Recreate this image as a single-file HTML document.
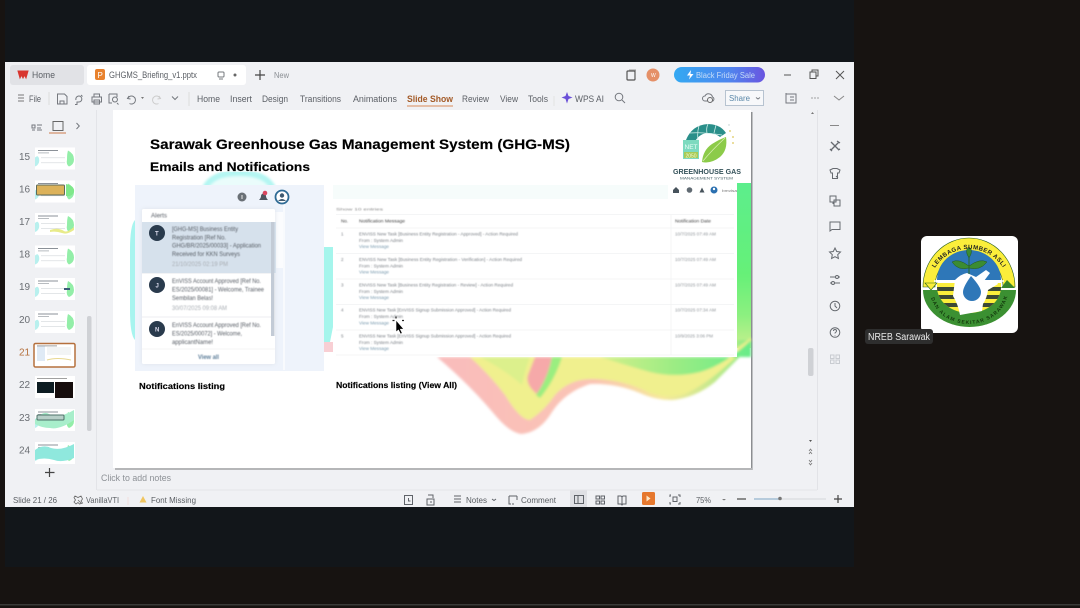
<!DOCTYPE html>
<html><head><meta charset="utf-8"><title>GHG-MS Briefing</title>
<style>
html,body{margin:0;padding:0;background:#171311;width:1080px;height:608px;overflow:hidden}
svg{display:block;font-family:"Liberation Sans",sans-serif}
.ui{fill:#5c6066;font-size:9px}
.ic{fill:none;stroke:#74787e;stroke-width:1}
.a{fill:#565c64;font-size:6px}
.g{fill:#a8adb3;font-size:6px}
.t{fill:#7c8187;font-size:4.5px}
.l{fill:#7c9cb0;font-size:4.5px}
.h{fill:#444;font-size:4.6px}
.d{fill:#92979c;font-size:4.3px}
.n{fill:#6a6e73;font-size:10px}
.b{fill:#000;font-weight:bold;stroke:#000;stroke-width:.15}
</style></head>
<body>
<svg width="1080" height="608" viewBox="0 0 1080 608" xmlns="http://www.w3.org/2000/svg">
<defs>
<linearGradient id="sale" x1="0" x2="1"><stop offset="0" stop-color="#33a9f2"/><stop offset=".6" stop-color="#4f86ee"/><stop offset="1" stop-color="#6a55e0"/></linearGradient>
<linearGradient id="gr" x1="0" y1="0" x2="0" y2="1"><stop offset="0" stop-color="#5cee8c"/><stop offset=".55" stop-color="#66f078"/><stop offset=".8" stop-color="#8cf080"/><stop offset="1" stop-color="#c8f08e"/></linearGradient>
<linearGradient id="gb" x1="0" y1="0" x2="1" y2="0"><stop offset="0" stop-color="#d4f08a"/><stop offset=".5" stop-color="#9bec84"/><stop offset="1" stop-color="#68ec88"/></linearGradient>
<linearGradient id="outer" gradientUnits="userSpaceOnUse" x1="437" y1="0" x2="751" y2="0"><stop offset="0" stop-color="#f9bcbc"/><stop offset=".5" stop-color="#fac4b4"/><stop offset=".72" stop-color="#f6e89a"/><stop offset=".85" stop-color="#cfe88e"/><stop offset="1" stop-color="#8cec84"/></linearGradient>
<filter id="s" x="-5%" y="-5%" width="110%" height="110%"><feGaussianBlur stdDeviation=".3"/></filter>
<filter id="s2" x="-5%" y="-5%" width="110%" height="110%"><feGaussianBlur stdDeviation=".5"/></filter>
<filter id="s1" x="-5%" y="-5%" width="110%" height="110%"><feGaussianBlur stdDeviation="1.200"/></filter>
<filter id="s3" x="-30%" y="-30%" width="160%" height="160%"><feGaussianBlur stdDeviation="2"/></filter>
<clipPath id="stripe"><path d="M937 283h64v4A32 26 0 0 1 937 287Z"/></clipPath>
<g id="th">
<rect x="0" y="0" width="40" height="22" fill="#fff"/>
<path d="M33 3q6 3 6 9q0 5-5 7q-3-2-2-7q0-6 1-9z" fill="#93eea8"/>
<path d="M0 10q3-3 4 1q1 4-2 7l-2 1z" fill="#b8f0ee"/>
<rect x="3" y="2.500" width="20" height="1" fill="#8b9198"/>
<rect x="3" y="5" width="11" height=".8" fill="#a6abb0"/>
<rect x="6" y="10" width="24" height=".6" fill="#d0d4d8"/>
<rect x="6" y="15" width="24" height=".6" fill="#d0d4d8"/>
</g>
<path id="arcT" d="M930 280A40 40 0 0 1 1008 280"/>
<path id="arcB" d="M930 290A39 34 0 0 0 1008 290"/>
</defs>

<rect width="1080" height="608" fill="#171311"/>
<rect x="5" y="0" width="849" height="567" fill="#12161a"/>
<rect x="0" y="604" width="1080" height="1.500" fill="#3a3a38"/>

<g filter="url(#s)">
<!-- window -->
<rect x="5" y="62" width="849" height="445" fill="#f0f1f4"/>
<rect x="10" y="65" width="74" height="20" rx="3" fill="#e1e2e6"/>
<rect x="87" y="65" width="159" height="20" rx="3" fill="#fff"/>
<path d="M18 71h10l-2 7-1.500-3-1.500 3-1.500-3-1.500 3z" fill="#d8362e" stroke="#d8362e"/>
<text x="32" y="78" class="ui" textLength="23" lengthAdjust="spacingAndGlyphs">Home</text>
<rect x="95" y="69" width="10" height="11" rx="2" fill="#e8822e"/>
<text x="97.500" y="78" font-size="8" fill="#fff">P</text>
<text x="109" y="78" class="ui" textLength="88" lengthAdjust="spacingAndGlyphs">GHGMS_Briefing_v1.pptx</text>
<rect x="218" y="72" width="6" height="5" rx="1" class="ic" stroke="#888"/><path d="M219 79h4" class="ic"/>
<circle cx="235" cy="75" r="1.500" fill="#666"/>
<path d="M260 70v10M255 75h10" stroke="#444" stroke-width="1.200"/>
<text x="274" y="78" fill="#8a8e93" font-size="8" textLength="15" lengthAdjust="spacingAndGlyphs">New</text>
<rect x="627" y="71" width="8" height="9" rx="1" fill="none" stroke="#555" stroke-width="1.200"/><path d="M629 70h6.500v8" fill="none" stroke="#999"/>
<circle cx="653" cy="75" r="6.500" fill="#e59068"/>
<text x="651" y="77" font-size="5" fill="#fff">W</text>
<rect x="674" y="67" width="91" height="15.500" rx="7.700" fill="url(#sale)"/>
<path d="M691 70l-4 5.500h3l-1 4 4.500-5.500h-3z" fill="#fff"/>
<text x="696" y="78" fill="#c6dcf8" font-size="8" textLength="59" lengthAdjust="spacingAndGlyphs">Black Friday Sale</text>
<path d="M784 75h7" stroke="#555" stroke-width="1"/>
<rect x="810" y="72" width="6" height="6.500" fill="none" stroke="#555"/><path d="M812 72v-2h6v6h-2" fill="none" stroke="#555"/>
<path d="M836 71l8 8M844 71l-8 8" stroke="#555"/>

<!-- toolbar -->
<path d="M18 95h6M18 98h6M18 101h6" stroke="#777"/>
<text x="29" y="102" class="ui" font-size="8.500" textLength="12" lengthAdjust="spacingAndGlyphs">File</text>
<path d="M49 92v13" stroke="#ddd"/>
<path d="M57.500 94h7l2.500 2.500v7.500h-9.500zM60 104v-3h4v3" class="ic"/>
<path d="M76 100a3 3 0 1 1 3 2h-2v2.500h-2M81 95l1.500 1.500" class="ic"/>
<path d="M92 97h9.500v5h-9.500zM94 97v-3h5.500v3M94 100h5.500v4H94z" class="ic"/>
<path d="M109 94h8v3M109 94v9h3M115 102a2.500 2.500 0 1 0-.1 0zM117 103l1.500 1.500" class="ic"/>
<path d="M129 96l-1.500 2.500 3 .5M128 98a4 4 0 1 1 1.500 5.500" class="ic"/>
<path d="M141 97l1.500 2 1.500-2z" fill="#777"/>
<path d="M159 96l1.500 2.500-3 .5M160 98a4 4 0 1 0-1.500 5.500" fill="none" stroke="#ccc"/>
<path d="M172 96.500l3 3 3-3" class="ic"/>
<path d="M189 92v14" stroke="#ddd"/>
<g class="ui">
<text x="197" y="102" textLength="23" lengthAdjust="spacingAndGlyphs">Home</text>
<text x="230" y="102" textLength="22" lengthAdjust="spacingAndGlyphs">Insert</text>
<text x="262" y="102" textLength="26" lengthAdjust="spacingAndGlyphs">Design</text>
<text x="300" y="102" textLength="41" lengthAdjust="spacingAndGlyphs">Transitions</text>
<text x="353" y="102" textLength="44" lengthAdjust="spacingAndGlyphs">Animations</text>
<text x="462" y="102" textLength="27" lengthAdjust="spacingAndGlyphs">Review</text>
<text x="500" y="102" textLength="18" lengthAdjust="spacingAndGlyphs">View</text>
<text x="528" y="102" textLength="20" lengthAdjust="spacingAndGlyphs">Tools</text>
<text x="575" y="102" textLength="29" lengthAdjust="spacingAndGlyphs">WPS AI</text>
</g>
<text x="407" y="102" font-size="9" font-weight="bold" fill="#a35a28" textLength="46" lengthAdjust="spacingAndGlyphs">Slide Show</text>
<rect x="407" y="105.500" width="46" height="1" fill="#d88a5a"/>
<path d="M554 96v10" stroke="#e2e2e2"/>
<path d="M567 92l1.500 4 4 1.500-4 1.500-1.500 4.500-1.500-4.500-4-1.500 4-1.500z" fill="#6a4fd8"/>
<circle cx="619" cy="97" r="3.800" class="ic"/><path d="M622 100l3 3" class="ic"/>
<path d="M705 101a2.500 2.500 0 0 1 0-5 4 4 0 0 1 7.500 1 2.300 2.300 0 0 1 .5 4z" class="ic"/><circle cx="710" cy="100" r="2.500" fill="#f0f1f4" stroke="#666"/>
<rect x="725.500" y="90.500" width="38" height="15" fill="#f7f8fa" stroke="#b7c3d0"/>
<text x="729" y="101" font-size="8" fill="#5a87a8" textLength="21" lengthAdjust="spacingAndGlyphs">Share</text>
<path d="M756 97.500l2 1.500 2-1.500" class="ic"/>
<path d="M786 94h10v9h-10zM786 94v-1M790 97h4M790 100h4" class="ic"/>
<circle cx="812" cy="98" r=".6" fill="#666"/><circle cx="815" cy="98" r=".6" fill="#666"/><circle cx="818" cy="98" r=".6" fill="#666"/>
<path d="M834 96l5 4 5-4" fill="none" stroke="#888"/>

<!-- left panel -->
<path d="M96.500 110v380" stroke="#e3e4e8"/>
<path d="M32 125h3v3h-3zM32 130h3M37 125h5M37 128h4M37 130h5" class="ic" stroke="#888"/>
<rect x="53" y="121.500" width="10" height="9" fill="none" stroke="#666"/>
<rect x="49" y="132.500" width="17" height="1" fill="#cc7a4c"/>
<path d="M76.500 123l2.800 3-2.800 3" class="ic"/>
<rect x="87" y="316" width="4.500" height="115" rx="2" fill="#cfd1d5"/>
<g class="n">
<text x="19" y="160" textLength="11">15</text>
<text x="19" y="192.500" textLength="11">16</text>
<text x="19" y="225" textLength="11">17</text>
<text x="19" y="257.500" textLength="11">18</text>
<text x="19" y="290" textLength="11">19</text>
<text x="19" y="323" textLength="11">20</text>
<text x="19" y="355.500" style="fill:#b5703c" textLength="11">21</text>
<text x="19" y="388" textLength="11">22</text>
<text x="19" y="421" textLength="11">23</text>
<text x="19" y="453.500" textLength="11">24</text>
</g>
<use href="#th" x="35" y="147.500"/>
<use href="#th" x="35" y="180.500"/>
<rect x="36.500" y="185" width="28" height="10" rx="1" fill="#dcb25a" stroke="#5c6a5a"/>
<path d="M66 184q9 2 8 8q-2 5-8 4z" fill="#7fe88a"/>
<use href="#th" x="35" y="213"/>
<path d="M50 230q8-3 14 1q3 2 10-4v3q-7 5-12 3q-6-2-12-1z" fill="#e8eb8a"/>
<use href="#th" x="35" y="245.500"/>
<use href="#th" x="35" y="278"/>
<rect x="64" y="288" width="6" height="2" fill="#3d5a78"/>
<use href="#th" x="35" y="311"/>
<rect x="34" y="343.500" width="41" height="23.500" rx="1.500" fill="#fff" stroke="#b5703c" stroke-width="1.500"/>
<rect x="37" y="346" width="8" height="15" fill="#dfeaf5"/>
<rect x="47" y="347" width="24" height="8" fill="#f2f4f5"/>
<path d="M47 360q10-3 24 0" fill="none" stroke="#e8d890"/>
<rect x="37" y="345.500" width="20" height=".8" fill="#888"/>
<rect x="35" y="376" width="40" height="22" fill="#fff"/>
<rect x="37" y="382" width="17" height="11" fill="#0b1a20"/><rect x="55" y="382" width="18" height="16" fill="#120a0a"/>
<rect x="37" y="378" width="30" height=".8" fill="#888"/>
<use href="#th" x="35" y="409"/>
<path d="M35 420q8-10 14-6q10 5 25-4v10q-14 10-24 8q-8 0-15-4z" fill="#a8eecb"/>
<rect x="37" y="415" width="27" height="5" rx="1" fill="#b7cfc8" stroke="#4e7068"/>
<use href="#th" x="35" y="442"/>
<path d="M35 450q8-6 16-2q10 3 23-4v14q-12 5-20 2q-10-3-19 0z" fill="#8fe8dd"/>
<path d="M49.500 468v9M45 472.500h9.500" stroke="#444" stroke-width="1.200"/>

<!-- slide -->
<rect x="751" y="112" width="1.500" height="358" fill="#8c8e91"/>
<rect x="115" y="468" width="637" height="2" fill="#b5b6b8"/>
<rect x="113" y="110" width="638" height="358" fill="#fff"/>
<!-- swooshes -->
<path d="M203 190q6-20 36-20q30 0 36 20z" fill="#eafcfb"/>
<path d="M205 188q7-15 34-15q27 0 34 15" fill="none" stroke="#b4f6f2" stroke-width="6" filter="url(#s1)"/>
<path d="M135 220q-5 5-5 30v60q0 25 5 30z" fill="#a8f4ef"/>
<path d="M324 247h9v80l-3 15h-6z" fill="#a5f5ec"/>
<path d="M324 342h9v10h-9z" fill="#f8cfd4"/>
<path d="M737 183h14v165h-14z" fill="url(#gr)"/>
<g filter="url(#s1)">
<path d="M437 357Q470 385 495 415Q510 433 522 434Q540 432 552 412Q565 392 590 384Q615 383 640 393Q655 400 672 400Q695 398 715 382Q735 362 751 345V340H737V357Z" fill="url(#outer)"/>
<path d="M470 357Q490 375 505 395Q520 420 530 420Q545 410 555 395Q570 378 595 379Q625 380 650 393Q668 399 685 394Q715 380 751 342V338L737 348V357Z" fill="#f0f08e"/>
<path d="M480 357H530Q525 370 522 385Q505 370 480 357Z" fill="#dcf08c"/>
<path d="M535 357H552Q548 380 538 395Q525 385 528 375Z" fill="#f6a9a9"/>
<path d="M552 357H562Q555 380 540 398L536 395Q548 378 552 357Z" fill="#9aee80"/>
<path d="M600 357H751V340Q725 365 700 372Q675 378 650 372Q625 365 600 357Z" fill="url(#gb)"/>
</g>
<text x="150" y="149" class="b" font-size="14" textLength="420" lengthAdjust="spacingAndGlyphs">Sarawak Greenhouse Gas Management System (GHG-MS)</text>
<text x="150" y="171" class="b" font-size="12" textLength="160" lengthAdjust="spacingAndGlyphs">Emails and Notifications</text>
<text x="139" y="389" class="b" font-size="8" textLength="86" lengthAdjust="spacingAndGlyphs">Notifications listing</text>
<text x="336" y="388" class="b" font-size="8" textLength="121" lengthAdjust="spacingAndGlyphs">Notifications listing (View All)</text>

<!-- ghg logo -->
<path d="M686 140Q692 125 708 124Q720 124 726 133L720 137Q712 131 703 134Q696 137 693 146Z" fill="#2b8f8a"/>
<path d="M690 133Q702 132 722 135M699 126Q697 132 698 140M708 124Q706 128 707 133M716 125Q715 129 714 133" fill="none" stroke="#cfeee9" stroke-width=".8"/>
<path d="M702 162Q703 150 712 144Q720 139 726 137Q728 150 720 157Q711 164 702 162Z" fill="#8ccb4a"/>
<path d="M703 161Q712 150 725 138" stroke="#d8eeb0" fill="none" stroke-width=".8"/>
<rect x="683" y="140" width="16" height="19" fill="#7ddabf"/>
<text x="684.500" y="149" font-size="6.500" fill="#eafff8" textLength="13" lengthAdjust="spacingAndGlyphs">NET</text>
<rect x="684" y="152" width="14" height="6" fill="#a9cb55"/>
<text x="685.500" y="157.500" font-size="5" fill="#f4f8d8" textLength="11">2050</text>
<circle cx="730" cy="131" r=".9" fill="#dcc65a"/><circle cx="733" cy="137" r=".9" fill="#dcc65a"/><circle cx="733" cy="143" r=".9" fill="#dcc65a"/><circle cx="729" cy="125" r=".7" fill="#bcc"/>
<text x="673" y="174" font-size="7.500" font-weight="bold" fill="#35525a" textLength="68" lengthAdjust="spacingAndGlyphs">GREENHOUSE GAS</text>
<text x="680" y="179.500" font-size="4" fill="#4a6468" textLength="53" lengthAdjust="spacingAndGlyphs">MANAGEMENT SYSTEM</text>

<!-- alerts panel -->
<rect x="135" y="185" width="189" height="186" fill="#eef3fb"/>
<rect x="275" y="212" width="8" height="56" fill="#fbfcfe"/>
<rect x="283" y="205" width="2" height="165" fill="#fff" opacity=".6"/>
<circle cx="242" cy="197" r="4.500" fill="#6a6f76"/><rect x="241.500" y="195" width="1" height="4" fill="#e8e8e8"/>
<path d="M259 200q2-2 2-4a2.500 2.500 0 0 1 5 0q0 2 2 4z" fill="#4d5561"/><circle cx="265" cy="193" r="2.300" fill="#d9455f"/>
<circle cx="282" cy="197" r="6.500" fill="#fff" stroke="#2e6a94" stroke-width="1.800"/><circle cx="282" cy="195.500" r="2.200" fill="#3f5a70"/><path d="M278 201q4-4 8 0" fill="#3f5a70"/>
<rect x="142" y="209" width="133" height="155" fill="#dfe3ea" filter="url(#s3)"/>
<rect x="142" y="209" width="133" height="155" rx="1.500" fill="#fff"/>
<rect x="142" y="222" width="134" height="51" fill="#d6e1ec"/>
<rect x="271" y="222" width="3.500" height="114" fill="#c3cbd6"/>
<path d="M142 317h129" stroke="#eceef1"/><path d="M142 273.500h129" stroke="#f2f3f5"/><path d="M142 349h133" stroke="#f4f5f6"/>
<circle cx="157" cy="233" r="8" fill="#2a3a4d"/><text x="155" y="235.500" font-size="6" fill="#dde" font-weight="bold">T</text>
<circle cx="157" cy="285" r="8" fill="#2a3a4d"/><text x="155.500" y="287.500" font-size="6" fill="#dde" font-weight="bold">J</text>
<circle cx="157" cy="329" r="8" fill="#2a3a4d"/><text x="155" y="331.500" font-size="6" fill="#dde" font-weight="bold">N</text>
<g filter="url(#s2)">
<text x="151" y="217.500" class="a" textLength="16" lengthAdjust="spacingAndGlyphs">Alerts</text>
<text x="172" y="231" class="a" textLength="66" lengthAdjust="spacingAndGlyphs">[GHG-MS] Business Entity</text>
<text x="172" y="239.500" class="a" textLength="54" lengthAdjust="spacingAndGlyphs">Registration [Ref No.</text>
<text x="172" y="247.500" class="a" textLength="89" lengthAdjust="spacingAndGlyphs">GHG/BR/2025/00033] - Application</text>
<text x="172" y="256" class="a" textLength="68" lengthAdjust="spacingAndGlyphs">Received for KKN Surveys</text>
<text x="172" y="266" class="g" textLength="56" lengthAdjust="spacingAndGlyphs">21/10/2025 02:19 PM</text>
<text x="172" y="283" class="a" textLength="89" lengthAdjust="spacingAndGlyphs">EnVISS Account Approved [Ref No.</text>
<text x="172" y="291.500" class="a" textLength="92" lengthAdjust="spacingAndGlyphs">ES/2025/00081] - Welcome, Trainee</text>
<text x="172" y="300" class="a" textLength="41" lengthAdjust="spacingAndGlyphs">Sembilan Belas!</text>
<text x="172" y="310" class="g" textLength="55" lengthAdjust="spacingAndGlyphs">30/07/2025 09:08 AM</text>
<text x="172" y="327" class="a" textLength="89" lengthAdjust="spacingAndGlyphs">EnVISS Account Approved [Ref No.</text>
<text x="172" y="335.500" class="a" textLength="70" lengthAdjust="spacingAndGlyphs">ES/2025/00072] - Welcome,</text>
<text x="172" y="344" class="a" textLength="41" lengthAdjust="spacingAndGlyphs">applicantName!</text>
<text x="198" y="359" font-size="6.500" font-weight="bold" fill="#5f7f9a" textLength="21" lengthAdjust="spacingAndGlyphs">View all</text>
</g>

<!-- table panel -->
<rect x="333" y="185" width="404" height="172" fill="#fff"/>
<rect x="333" y="185" width="335" height="14" fill="#f6fcfb"/>
<path d="M673 190l3-3 3 3v3h-6z" fill="#47535c"/><circle cx="689.500" cy="190" r="2.800" fill="#606a72"/><path d="M699.500 192.500l2.500-5 2.500 5z" fill="#47535c"/><circle cx="714" cy="190" r="3.500" fill="#2a6fb0"/><circle cx="714" cy="189" r="1.200" fill="#fff"/>
<text x="722" y="192" font-size="4" fill="#777" textLength="15" lengthAdjust="spacingAndGlyphs">bmvisa</text>
<g filter="url(#s2)">
<text x="336" y="210.500" font-size="4" fill="#888" textLength="47" lengthAdjust="spacingAndGlyphs">Show 10 entries</text>
<text x="341" y="222.500" class="h" textLength="7">No.</text>
<text x="359" y="222.500" class="h" textLength="46" lengthAdjust="spacingAndGlyphs">Notification Message</text>
<text x="675" y="222.500" class="h" textLength="36" lengthAdjust="spacingAndGlyphs">Notification Date</text>
<g class="t">
<text x="341" y="235.500">1</text><text x="341" y="261">2</text><text x="341" y="286.500">3</text><text x="341" y="311.500">4</text><text x="341" y="337.500">5</text>
<text x="359" y="235.500" textLength="159" lengthAdjust="spacingAndGlyphs">ENVISS New Task [Business Entity Registration - Approved] - Action Required</text>
<text x="359" y="242" textLength="44" lengthAdjust="spacingAndGlyphs">From : System Admin</text>
<text x="359" y="261" textLength="163" lengthAdjust="spacingAndGlyphs">ENVISS New Task [Business Entity Registration - Verification] - Action Required</text>
<text x="359" y="267.500" textLength="44" lengthAdjust="spacingAndGlyphs">From : System Admin</text>
<text x="359" y="286.500" textLength="154" lengthAdjust="spacingAndGlyphs">ENVISS New Task [Business Entity Registration - Review] - Action Required</text>
<text x="359" y="293" textLength="44" lengthAdjust="spacingAndGlyphs">From : System Admin</text>
<text x="359" y="311.500" textLength="152" lengthAdjust="spacingAndGlyphs">ENVISS New Task [EnVISS Signup Submission Approved] - Action Required</text>
<text x="359" y="318" textLength="44" lengthAdjust="spacingAndGlyphs">From : System Admin</text>
<text x="359" y="337.500" textLength="152" lengthAdjust="spacingAndGlyphs">ENVISS New Task [EnVISS Signup Submission Approved] - Action Required</text>
<text x="359" y="344" textLength="44" lengthAdjust="spacingAndGlyphs">From : System Admin</text>
</g>
<g class="l">
<text x="359" y="248" textLength="30" lengthAdjust="spacingAndGlyphs">View Message</text>
<text x="359" y="273.500" textLength="30" lengthAdjust="spacingAndGlyphs">View Message</text>
<text x="359" y="299" textLength="30" lengthAdjust="spacingAndGlyphs">View Message</text>
<text x="359" y="324.500" textLength="30" lengthAdjust="spacingAndGlyphs">View Message</text>
<text x="359" y="350" textLength="30" lengthAdjust="spacingAndGlyphs">View Message</text>
</g>
<g class="d">
<text x="675" y="235.500" textLength="41" lengthAdjust="spacingAndGlyphs">10/7/2025 07:49 AM</text>
<text x="675" y="261" textLength="41" lengthAdjust="spacingAndGlyphs">10/7/2025 07:49 AM</text>
<text x="675" y="286.500" textLength="41" lengthAdjust="spacingAndGlyphs">10/7/2025 07:49 AM</text>
<text x="675" y="311.500" textLength="41" lengthAdjust="spacingAndGlyphs">10/7/2025 07:34 AM</text>
<text x="675" y="337.500" textLength="38" lengthAdjust="spacingAndGlyphs">10/9/2025 3:06 PM</text>
</g>
</g>
<path d="M336 214.500h398M336 228h398M336 253.500h398M336 279h398M336 304.500h398M336 330h398M336 355h398M671 215v140" stroke="#f1f2f3" stroke-width=".7"/>
<!-- cursor -->
<path d="M396 320v12l2.500-2 2 4 1.800-.8-2-4h3.500z" fill="#000" stroke="#fff" stroke-width=".6"/>
<path d="M396 316.500v2M392.500 320.500h2M402 320.500h2" stroke="#222" stroke-width="1.200"/>

<!-- notes -->
<text x="101" y="481" font-size="9" fill="#8d9196" textLength="70" lengthAdjust="spacingAndGlyphs">Click to add notes</text>
<path d="M97 490h720" stroke="#e4e5e8"/>
<!-- right strip -->
<path d="M817.500 110v380" stroke="#e2e3e7"/>
<path d="M811 114l1.500-2 1.500 2z" fill="#777"/>
<rect x="808" y="348" width="5.500" height="28" rx="2" fill="#cfd1d5"/>
<path d="M809 440l1.500 2 1.500-2z" fill="#555"/>
<path d="M809 451l1.500-2 1.500 2M809 454l1.500-2 1.500 2M809 460l1.500 2 1.500-2M809 463l1.500 2 1.500-2" fill="none" stroke="#777" stroke-width=".8"/>
<g fill="none" stroke="#666a6f" stroke-width="1">
<path d="M830 125.500h9" stroke="#888"/>
<path d="M831 142l8 8M839 142l-8 8M837 141l3 2M830 149l2 2M838 150l2-1" stroke-width="1.300"/>
<path d="M830 170l3-1.500h4l3 1.500-1 3h-1.500v5.500h-5V173H831zM836 176l2 2" />
<path d="M830 196h6v6h-6zM834 200h6v6h-6zM833 204v-2" />
<path d="M830 222h10v7.500h-8l-2 1.500z"/>
<path d="M835 248l1.700 3.500 3.800.5-2.800 2.700.7 3.800-3.400-1.800-3.400 1.800.7-3.800-2.800-2.700 3.800-.5z"/>
<path d="M830 277h6M838 277h2M830 283h2M834 283h6"/><circle cx="837" cy="277" r="1.500"/><circle cx="833" cy="283" r="1.500"/>
<circle cx="835" cy="306" r="4.800"/><path d="M835 303v3l2 2"/>
<circle cx="835" cy="332.500" r="4.800"/><path d="M833.500 331q0-1.500 1.500-1.500t1.500 1.500q0 1-1.500 2v.5M835 335.500v.5"/>
<path stroke="#c9ccd1" d="M830.500 355h3.500v3.500h-3.500zM836 355h3.500v3.500H836zM830.500 360h3.500v3.500h-3.500zM836 360h3.500v3.500H836z"/>
</g>

<!-- status bar -->
<g fill="#5a5e63" font-size="8.500">
<text x="13" y="503" textLength="44" lengthAdjust="spacingAndGlyphs">Slide 21 / 26</text>
<text x="86" y="503" textLength="33" lengthAdjust="spacingAndGlyphs">VanillaVTI</text>
<text x="151" y="503" textLength="45" lengthAdjust="spacingAndGlyphs">Font Missing</text>
<text x="466" y="503" textLength="21" lengthAdjust="spacingAndGlyphs">Notes</text>
<text x="521" y="503" textLength="35" lengthAdjust="spacingAndGlyphs">Comment</text>
<text x="696" y="503" textLength="15" lengthAdjust="spacingAndGlyphs">75%</text>
</g>
<path d="M75 496l3 1.500 3-1.500 1.500 3-1.500 2 1.500 2-3 1-1.500-1.500-2 1.500-2-2 1.500-2-1.500-2.500zM78 500l3 3" fill="none" stroke="#666" stroke-width=".8"/>
<path d="M128 497v8" stroke="#f2dede"/>
<path d="M143 496l3.500 6.500h-7z" fill="#f0c560"/>
<g fill="none" stroke="#5f6369">
<rect x="404.500" y="495.500" width="8" height="9"/><path d="M408.500 498v3h2"/>
<path d="M428 495h5v3M427 499h7v6h-7zM430 502h2"/>
<path d="M454 496h7M454 499h7M454 502h7"/>
<path d="M492 499l2 1.500 2-1.500" />
<path d="M509 496h8M509 496v8h2M517 496v4M512 504h2"/>
<rect x="570" y="490.500" width="17" height="16.500" fill="#dfe0e4" stroke="none"/>
<rect x="574.500" y="495.500" width="9" height="8"/><path d="M578 495.500v8"/>
<path d="M596 496h3.500v3H596zM601 496h3.500v3H601zM596 501h3.500v3H596zM601 501h3.500v3H601z"/>
<path d="M618 496h3l1 1 1-1h3v8h-3l-1 1-1-1h-3zM622 497v7"/>
<path d="M671 495h-1v2M678 495h2v2M671 504h-1v-2M678 504h2v-2"/><rect x="673" y="497" width="4" height="4.500"/>
</g>
<rect x="642" y="492" width="13" height="13" rx="1.500" fill="#e6782e"/>
<path d="M646.500 495.500l4 3-4 3z" fill="#ffe9c8"/>
<path d="M722 499l2 1.500 2-1.500" fill="#777"/>
<path d="M737 499h9" stroke="#555" stroke-width="1.300"/>
<path d="M754 499h72" stroke="#d4d6da"/><path d="M754 499h26" stroke="#7da5c4"/>
<circle cx="780" cy="498.500" r="1.800" fill="#777"/>
<path d="M838 495v8M834 499h8" stroke="#444" stroke-width="1.200"/>
</g>

<!-- side tile -->
<g filter="url(#s)">
<rect x="921" y="236" width="97" height="97" rx="6" fill="#fff"/>
<!-- yellow crown -->
<path d="M923 287A46 49 0 0 1 1015 287H1003A34 34 0 0 0 935 287Z" fill="#fbee3a" stroke="#2b5e22" stroke-width=".6"/>
<!-- blue dome -->
<path d="M937 280A32 30 0 0 1 1001 280Z" fill="#2f77b8"/>
<path d="M934 281h70" stroke="#fff" stroke-width="1.500"/>
<path d="M925 283h12l-6 7z" fill="#fbee3a" stroke="#26651e" stroke-width=".6"/>
<path d="M1001 288l6-8 8 8z" fill="#37842d"/>
<!-- green lower -->
<path d="M923 290h93a46.500 37 0 0 1-93 0z" fill="#3b9030"/>
<g clip-path="url(#stripe)">
<rect x="936" y="283" width="66" height="32" fill="#fbee3a"/>
<g fill="#3c4a34"><rect x="936" y="287" width="66" height="4"/><rect x="936" y="295" width="66" height="4"/><rect x="936" y="303" width="66" height="4"/></g>
</g>
<!-- hand -->
<path d="M955 280Q961 274 967 273L976 277L986 270L990 273L984 281L996 280L998 284L988 290Q987 298 983 304L982 311L960 315Q958 304 953 296Z" fill="#fff"/>
<path d="M971 276Q963 287 963 292a9 9 0 0 0 18 0Q981 287 971 276Z" fill="#2f77b8"/>
<!-- leaves -->
<path d="M969 274V254" stroke="#2b6a25" fill="none"/>
<path d="M969 266Q958 258 952 262Q958 271 969 268ZM969 266Q980 258 987 262Q980 271 969 268ZM969 258Q964 250 969 247Q974 250 969 258Z" fill="#3b8c30" stroke="#24561f" stroke-width=".5"/>
<text font-size="6" font-weight="bold" fill="#222"><textPath href="#arcT" startOffset="13" textLength="81" lengthAdjust="spacing">LEMBAGA SUMBER ASLI</textPath></text>
<text font-size="5" font-weight="bold" fill="#12380f"><textPath href="#arcB" startOffset="8" textLength="100" lengthAdjust="spacing">DAN ALAM SEKITAR SARAWAK</textPath></text>
<rect x="865" y="329" width="68" height="15" rx="3" fill="#2f2f2f"/>
<text x="868" y="340" font-size="10" fill="#e8e8e8" textLength="62" lengthAdjust="spacingAndGlyphs">NREB Sarawak</text>
</g>
</svg>
</body></html>
